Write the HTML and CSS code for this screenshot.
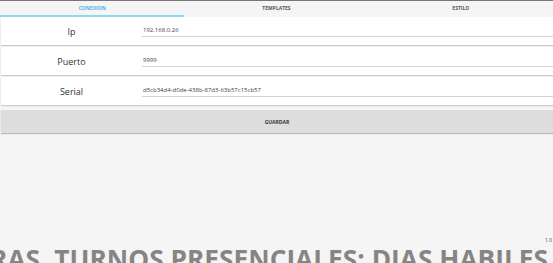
FILE: index.html
```html
<!DOCTYPE html>
<html>
    <head>
        <meta charset="UTF-8"/>
        <title>Config</title>
        <link rel="stylesheet" href="styles.css">
    </head>

    <body>
        <div class="page">
            <ul class="tabs">
                <li class="tab active">CONEXION</li>
                <li class="tab">TEMPLATES</li>
                <li class="tab">ESTILO</li>
            </ul>

            <div class="form">
                <div class="row">
                    <label>Ip</label>
                    <span class="field">192.168.0.26</span>
                </div>
                <div class="row">
                    <label>Puerto</label>
                    <span class="field">9999</span>
                </div>
                <div class="row">
                    <label>Serial</label>
                    <span class="field">d5cb34d4-d0de-438b-87d3-63b57c15cb57</span>
                </div>
            </div>

            <button class="save">GUARDAR</button>

            <div class="footer">
                <div class="version">1.0</div>
                <div class="ticker">
                    <span>HORAS. TURNOS PRESENCIALES: DIAS HABILES</span>
                </div>
            </div>
        </div>
    </body>
</html>
```

FILE: styles.css
```css
html,body{
    margin:0;
    padding:0;
    background:#f5f5f5;
    font-family:"Open Sans","Noto Sans",sans-serif;
}
ul,li{
    list-style:none;
    margin:0;
    padding:0;
}
.page{
    display:flex;
    flex-direction:column;
    height:100vh;
    overflow:hidden;
    border-top:1px #777 solid;
    box-sizing:border-box;
}

.tabs{
    display:flex;
    height:16px;
    background:#f5f5f5;
}
.tab{
    flex:1;
    text-align:center;
    font-size:5px;
    font-weight:700;
    line-height:14px;
    color:#555;
    border-bottom:2px transparent solid;
}
.tab.active{
    color:#4ab3ef;
    border-bottom-color:#90d4f7;
}

.form{
    display:flex;
    flex-direction:column;
    gap:2px;
    padding-left:1px;
}
.row{
    display:grid;
    grid-template-columns:141px 1fr;
    align-items:center;
    height:28px;
    background:#fff;
    box-shadow:0 1px 1px #ccc;
}
.row label{
    text-align:center;
    font-size:9px;
    color:#333;
    padding-top:1px;
}
.field{
    font-size:6px;
    color:#444;
    border-bottom:1px #d5d5d5 solid;
    padding:0 0 2px 1px;
    margin-top:1px;
}

.save{
    margin:5px 0 0 1px;
    height:23px;
    border:none;
    background:#dcdddc;
    box-shadow:0 1px 1px #bbb;
    font-family:inherit;
    font-size:5px;
    font-weight:700;
    color:#333;
    padding:0;
}

.footer{
    margin-top:auto;
}
.version{
    text-align:right;
    font-size:5px;
    color:#444;
    padding-right:1px;
}
.ticker{
    display:flex;
    justify-content:flex-end;
    height:20px;
    white-space:nowrap;
    padding-right:5px;
}
.ticker span{
    font-size:26.3px;
    font-weight:700;
    color:#858585;
    line-height:33px;
}
```
